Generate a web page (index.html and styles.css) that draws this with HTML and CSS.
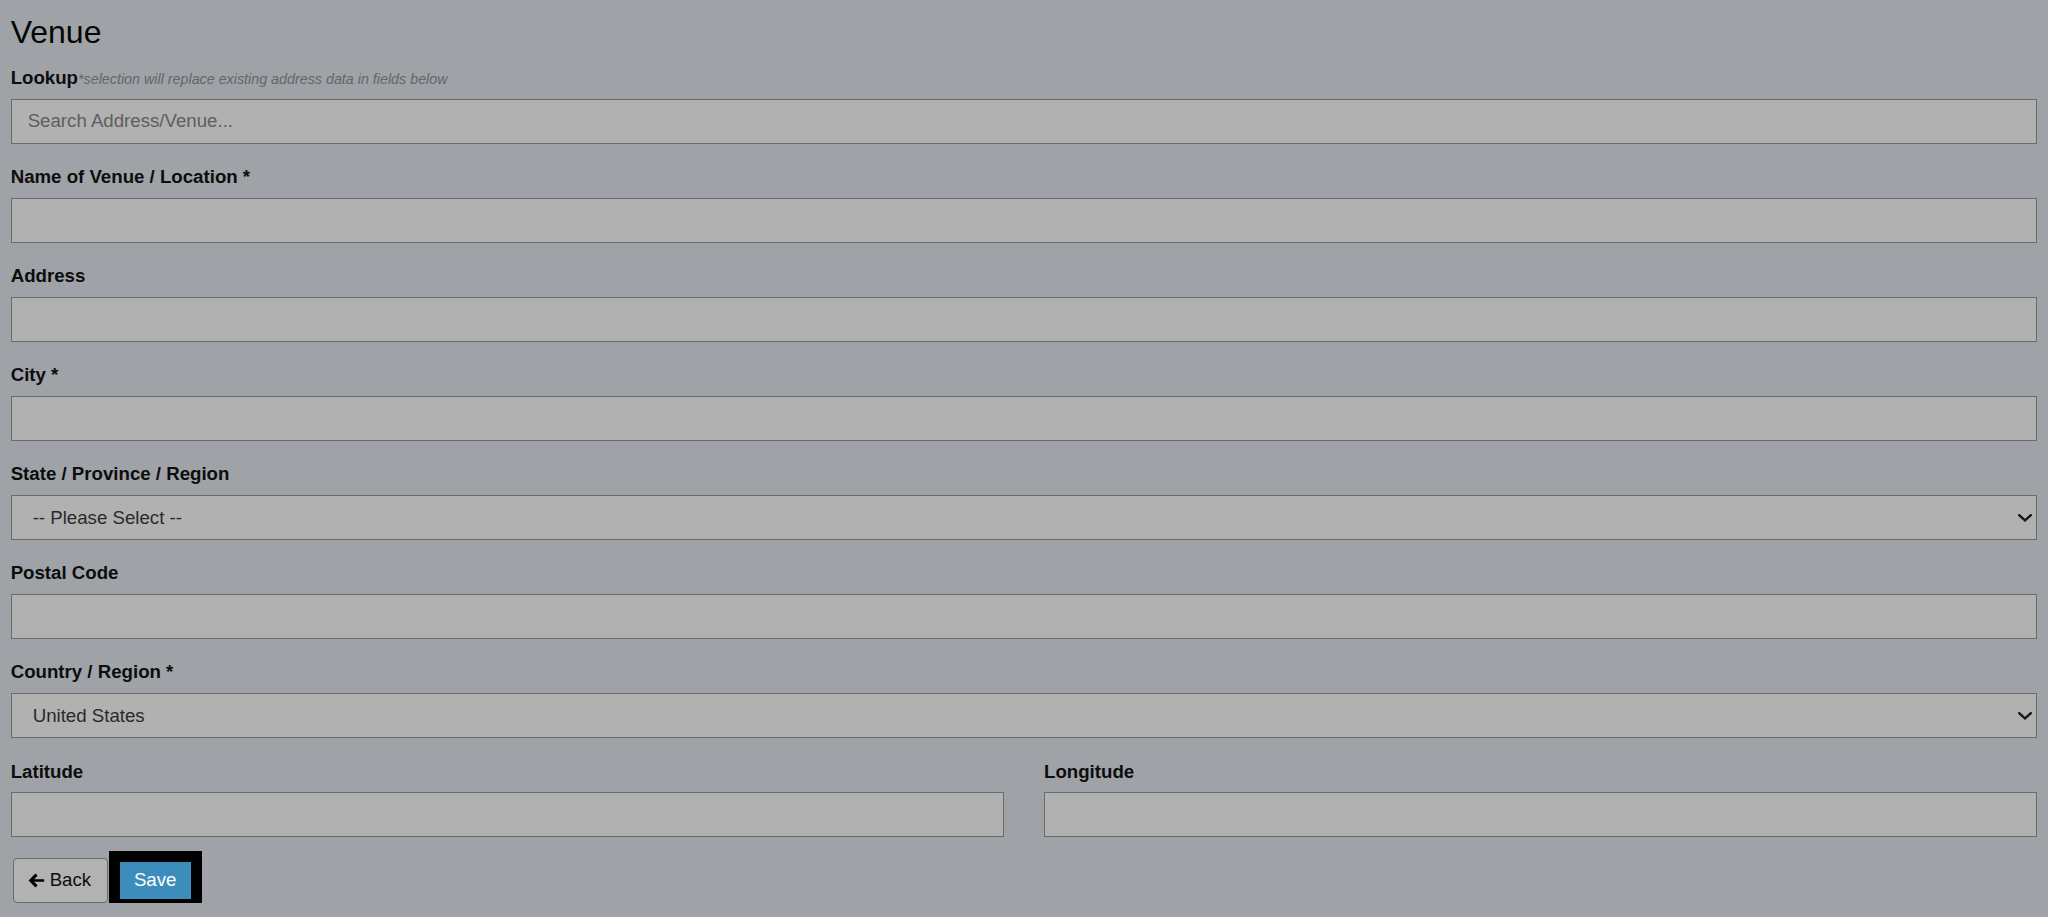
FILE: index.html
```html
<!DOCTYPE html>
<html lang="en">
<head>
<meta charset="utf-8">
<title>Venue</title>
<link rel="stylesheet" href="styles.css">
</head>
<body>
<div class="page">
  <h3 class="title">Venue</h3>
  <form class="venue-form">
    <div class="form-group">
      <label class="field-label">Lookup<span class="hint">*selection will replace existing address data in fields below</span></label>
      <input class="field" type="text" placeholder="Search Address/Venue...">
    </div>
    <div class="form-group">
      <label class="field-label">Name of Venue / Location *</label>
      <input class="field" type="text">
    </div>
    <div class="form-group">
      <label class="field-label">Address</label>
      <input class="field" type="text">
    </div>
    <div class="form-group">
      <label class="field-label">City *</label>
      <input class="field" type="text">
    </div>
    <div class="form-group">
      <label class="field-label">State / Province / Region</label>
      <div class="select-wrap">
        <select class="field select">
          <option>-- Please Select --</option>
        </select>
        <svg class="chevron" viewBox="0 0 14 8" width="14" height="8"><path d="M1.2 1.2 L7 6.4 L12.8 1.2" fill="none" stroke="#1a1a1a" stroke-width="2.4" stroke-linecap="square"/></svg>
      </div>
    </div>
    <div class="form-group">
      <label class="field-label">Postal Code</label>
      <input class="field" type="text">
    </div>
    <div class="form-group">
      <label class="field-label">Country / Region *</label>
      <div class="select-wrap">
        <select class="field select">
          <option>United States</option>
        </select>
        <svg class="chevron" viewBox="0 0 14 8" width="14" height="8"><path d="M1.2 1.2 L7 6.4 L12.8 1.2" fill="none" stroke="#1a1a1a" stroke-width="2.4" stroke-linecap="square"/></svg>
      </div>
    </div>
    <div class="coords">
      <div class="form-group">
        <label class="field-label">Latitude</label>
        <input class="field" type="text">
      </div>
      <div class="form-group">
        <label class="field-label">Longitude</label>
        <input class="field" type="text">
      </div>
    </div>
    <div class="actions">
      <button type="button" class="btn btn-back"><svg class="arrow" viewBox="0 0 17 15" width="17" height="15"><path d="M7.4 0.6 L9.6 2.8 L6.1 6.2 H16.2 V8.8 H6.1 L9.6 12.2 L7.4 14.4 L0.6 7.5 Z" fill="#000"/></svg>Back</button>
      <button type="button" class="btn btn-save">Save</button>
    </div>
  </form>
</div>
</body>
</html>
```

FILE: styles.css
```css
html, body {
  margin: 0;
  padding: 0;
}

body {
  background: #9fa2a7;
  font-family: "Liberation Sans", Arial, sans-serif;
  font-size: 18.67px;
  line-height: 1.42857;
  color: #0d0d0d;
}

.page {
  padding: 15px 10.67px 0;
}

.title {
  margin: 0 0 15px;
  font-size: 32px;
  font-weight: normal;
  line-height: 1.1;
  color: #050505;
}

.form-group {
  margin-bottom: 20.4px;
}

.field-label {
  display: block;
  margin-bottom: 6.67px;
  font-weight: bold;
}

.hint {
  font-size: 14.3px;
  font-style: italic;
  font-weight: normal;
  color: #63666a;
}

.field {
  display: block;
  box-sizing: border-box;
  width: 100%;
  height: 45.33px;
  margin: 0;
  padding: 8.67px 16px;
  border: 1px solid #6b6b6b;
  border-radius: 0;
  background: #b1b1b1;
  font-family: "Liberation Sans", Arial, sans-serif;
  font-size: 18.67px;
  color: #2a2a2a;
  outline: none;
}

.field::placeholder {
  color: #5e5e5e;
}

.select-wrap {
  position: relative;
}

.select {
  -webkit-appearance: none;
  appearance: none;
  padding-left: 21px;
}

.chevron {
  position: absolute;
  right: 5px;
  top: 19px;
  pointer-events: none;
}

.coords {
  display: grid;
  grid-template-columns: 1fr 1fr;
  column-gap: 40px;
}

.actions {
  display: flex;
  align-items: center;
}

.btn {
  box-sizing: border-box;
  height: 45.33px;
  margin: 0;
  font-family: "Liberation Sans", Arial, sans-serif;
  font-size: 18.67px;
  line-height: 1;
  cursor: pointer;
}

.btn-back {
  display: flex;
  align-items: center;
  gap: 5px;
  margin-left: 2px;
  width: 95px;
  padding: 0 0 0 14px;
  border: 1px solid #6b6b6b;
  border-radius: 4px;
  background: #b2b2b2;
  color: #0d0d0d;
}

.btn-back .arrow {
  width: 17px;
  height: 15px;
  flex: none;
}

.btn-save {
  margin-left: 8px;
  width: 79px;
  padding: 0;
  border: 4px solid #000;
  outline: 7px solid #000;
  border-radius: 0;
  background: #3c8dbc;
  color: #fff;
}
```
